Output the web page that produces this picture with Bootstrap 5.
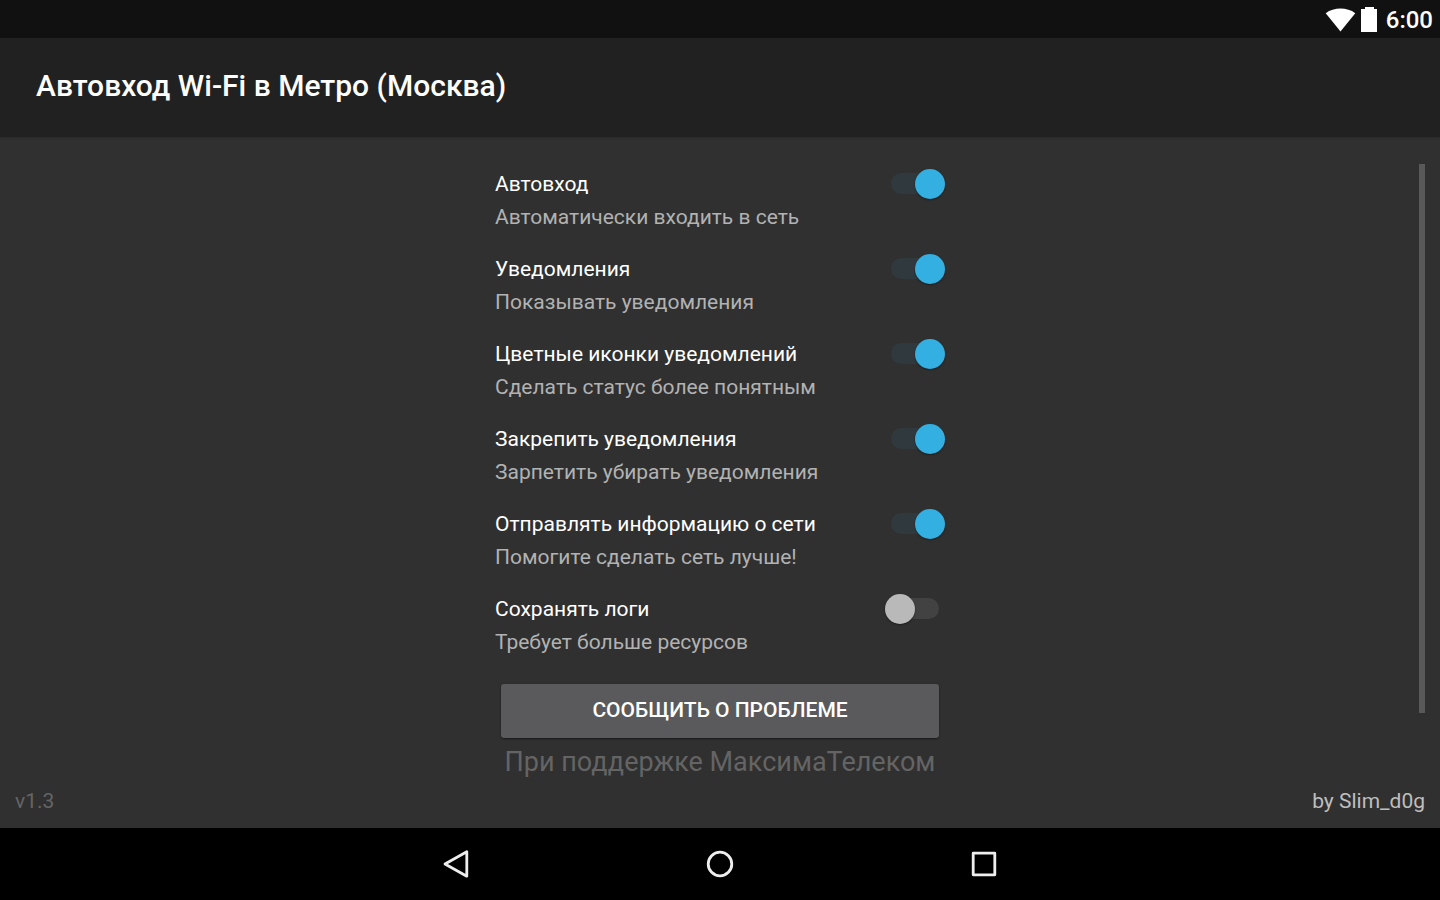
<!DOCTYPE html>
<html lang="ru" data-bs-theme="dark">
<head>
<meta charset="utf-8">
<meta name="viewport" content="width=device-width, initial-scale=1">
<title>Автовход Wi-Fi в Метро (Москва)</title>
<link rel="stylesheet" href="https://cdn.jsdelivr.net/npm/bootstrap@5.3.0/dist/css/bootstrap.min.css">
<style>
  body { font-family: Roboto, "Noto Sans", sans-serif; font-size: 21px; line-height: 33px; background: #303030; color: #fff; }
  .status-bar { height: 38px; background: #111; padding: 2px 7px 0; gap: 4px; font-size: 24px; font-weight: 500; }
  .app-bar { height: 99px; background: #212121; padding: 0 36px 4px; box-shadow: 0 1px 2px #2a2a2a; }
  .app-title { font-size: 30px; line-height: 36px; font-weight: 500; }
  .settings-pane { padding-top: 31px; }
  .settings-list { width: 450px; max-width: 100%; }
  .setting { margin-bottom: 19px; }
  .setting-note { color: #b2b2b2; }
  .toggle { appearance: none; position: relative; width: 60px; height: 30px; margin: 1px 0 0; flex: none; cursor: pointer; }
  .toggle::before { content: ""; position: absolute; left: 0; top: 4px; width: 54px; height: 21px; border-radius: 11px; background: #424242; }
  .toggle::after { content: ""; position: absolute; left: 0; top: 0; width: 30px; height: 30px; border-radius: 50%; background: #b9b9b9; box-shadow: 0 1px 2px rgba(0,0,0,.4); }
  .toggle:checked::before { left: 6px; background: #30393e; }
  .toggle:checked::after { left: 30px; background: #33afe1; }
  .report-btn { --bs-btn-bg: #5a5a5c; --bs-btn-color: #fff; --bs-btn-hover-bg: #68686a; --bs-btn-hover-color: #fff; height: 54px; margin: 6px 6px; padding: 0; border: 0; border-radius: 3px; font-size: 21px; font-weight: 500; box-shadow: 0 1px 2px rgba(0,0,0,.5); }
  .support { font-size: 27px; line-height: 36px; color: #646464; }
  .scroll-thumb { top: 27px; bottom: 115px; right: 15px; width: 6px; background: #595959; }
  .credits { padding: 0 15px 10px; }
  .version { color: #646464; }
  .author { color: #bebebe; }
  .nav-keys { height: 72px; background: #000; gap: 234px; }
  .nav-keys button { width: 30px; height: 30px; padding: 0; border: 0; background: none; display: flex; }
</style>
</head>
<body class="d-flex flex-column min-vh-100">
  <div class="status-bar d-flex align-items-center justify-content-end">
    <svg width="31" height="24" viewBox="0 0 31 24" fill="#fff" aria-hidden="true"><path d="M.7 5.2C9-1 22-1 30.300 5.200L15.500 23.500z"/></svg>
    <svg width="18" height="26" viewBox="0 0 18 26" fill="#fff" aria-hidden="true"><path d="M5 0h9v2h3v23H1V2h4z"/></svg>
    <time class="ms-1" datetime="06:00">6:00</time>
  </div>

  <header class="app-bar d-flex align-items-center">
    <h1 class="app-title m-0">Автовход Wi-Fi в Метро (Москва)</h1>
  </header>

  <main class="position-relative flex-grow-1 d-flex flex-column">
    <div class="settings-pane flex-grow-1 d-flex justify-content-center">
      <form class="settings-list">
        <div class="setting d-flex justify-content-between">
          <label for="auto">Автовход<span class="setting-note d-block">Автоматически входить в сеть</span></label>
          <input class="toggle" type="checkbox" role="switch" id="auto" checked>
        </div>
        <div class="setting d-flex justify-content-between">
          <label for="notify">Уведомления<span class="setting-note d-block">Показывать уведомления</span></label>
          <input class="toggle" type="checkbox" role="switch" id="notify" checked>
        </div>
        <div class="setting d-flex justify-content-between">
          <label for="color">Цветные иконки уведомлений<span class="setting-note d-block">Сделать статус более понятным</span></label>
          <input class="toggle" type="checkbox" role="switch" id="color" checked>
        </div>
        <div class="setting d-flex justify-content-between">
          <label for="pin">Закрепить уведомления<span class="setting-note d-block">Зарпетить убирать уведомления</span></label>
          <input class="toggle" type="checkbox" role="switch" id="pin" checked>
        </div>
        <div class="setting d-flex justify-content-between">
          <label for="send">Отправлять информацию о сети<span class="setting-note d-block">Помогите сделать сеть лучше!</span></label>
          <input class="toggle" type="checkbox" role="switch" id="send" checked>
        </div>
        <div class="setting d-flex justify-content-between">
          <label for="logs">Сохранять логи<span class="setting-note d-block">Требует больше ресурсов</span></label>
          <input class="toggle" type="checkbox" role="switch" id="logs">
        </div>
        <div class="d-grid">
          <button type="button" class="btn report-btn">СООБЩИТЬ О ПРОБЛЕМЕ</button>
        </div>
        <div class="support text-center text-nowrap">При поддержке МаксимаТелеком</div>
      </form>
    </div>
    <div class="credits d-flex justify-content-between">
      <span class="version">v1.3</span>
      <span class="author">by Slim_d0g</span>
    </div>
    <div class="scroll-thumb position-absolute"></div>
  </main>

  <nav class="nav-keys d-flex align-items-center justify-content-center" aria-label="Система">
    <button type="button" aria-label="Назад"><svg width="30" height="30" viewBox="0 0 30 30" fill="none" stroke="#eee" stroke-width="2.800" stroke-linejoin="round"><path d="M25.800 2.800v24.400L4 15z"/></svg></button>
    <button type="button" aria-label="Домой"><svg width="30" height="30" viewBox="0 0 30 30" fill="none" stroke="#eee" stroke-width="2.800"><circle cx="15" cy="15" r="11.800"/></svg></button>
    <button type="button" aria-label="Недавние"><svg width="30" height="30" viewBox="0 0 30 30" fill="none" stroke="#eee" stroke-width="2.800" stroke-linejoin="round"><path d="M4.200 4.200h21.600v21.600H4.200z"/></svg></button>
  </nav>
<script src="https://cdn.jsdelivr.net/npm/bootstrap@5.3.0/dist/js/bootstrap.bundle.min.js"></script>
</body>
</html>
